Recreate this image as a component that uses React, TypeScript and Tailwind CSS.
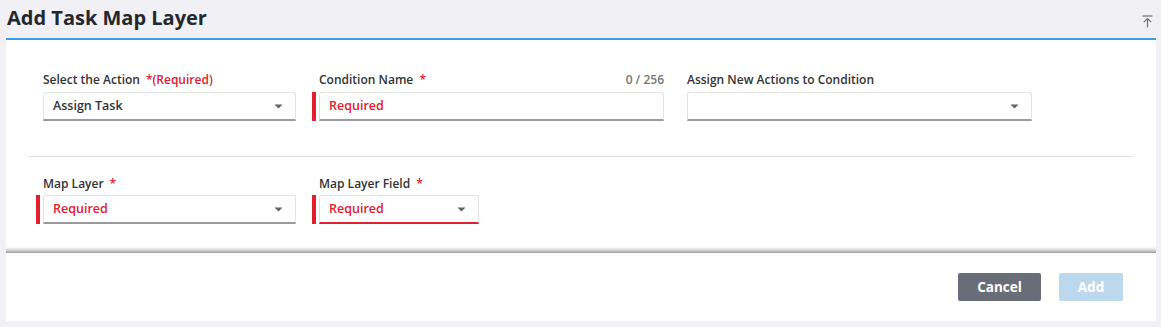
import React from "react";

const Caret = () => (
  <svg width="9" height="5" viewBox="0 0 9 5" className="shrink-0">
    <path d="M0.5 0.5 L8.5 0.5 L4.5 4.5 Z" fill="#616161" />
  </svg>
);

function Select({ value, required, widthClass, redBottom }: { value?: string; required?: boolean; widthClass: string; redBottom?: boolean }) {
  return (
    <div className={`relative ${widthClass}`}>
      {required && <div className="absolute left-[-7px] top-0 bottom-0 w-[4px] bg-[#e0202e]" />}
      <div
        className={`h-[29px] flex items-center justify-between pl-[9px] pr-[12px] bg-white border border-[#e2e2e2] rounded-t-[3px] ${
          redBottom ? "border-b-2 border-b-[#e0202e]" : "border-b-2 border-b-[#9a9a9a]"
        }`}
      >
        <span className={`text-[12.5px] font-semibold ${required ? "text-[#e0202e]" : "text-[#333]"}`}>{value}</span>
        <Caret />
      </div>
    </div>
  );
}

export default function App() {
  return (
    <div
      className="w-[1161px] h-[327px] bg-[#f1f0f5] pl-[6px] pr-[5px] overflow-hidden"
      style={{ fontFamily: '"Open Sans", "Noto Sans", sans-serif' }}
    >
      <div className="h-[38px] flex items-start justify-between">
        <h1 className="text-[20px] font-bold text-[#24282d] leading-none pl-[1px] pt-[8px]">Add Task Map Layer</h1>
        <svg width="11" height="13" viewBox="0 0 11 13" className="mt-[15px] mr-[3px]">
          <path d="M0.5 1 H10.5" stroke="#6f6f6f" strokeWidth="1.2" />
          <path d="M5.5 3.5 V12.5 M1.8 7.2 L5.5 3.5 L9.2 7.2" stroke="#6f6f6f" strokeWidth="1.2" fill="none" />
        </svg>
      </div>
      <div className="w-[1150px] border-t-2 border-t-[#3a9de8] bg-white">
        <div className="h-[207px] pt-[32px]">
          <div className="flex pl-[37px]">
            <div className="w-[253px]">
              <div className="h-[15px] flex items-center text-[12px] font-semibold text-[#333] mb-[5px]">
                Select the Action <span className="text-[#e0202e] ml-[6px]">*(Required)</span>
              </div>
              <Select value="Assign Task" widthClass="w-[253px]" />
            </div>
            <div className="w-[345px] ml-[23px]">
              <div className="h-[15px] flex items-center justify-between text-[12px] font-semibold text-[#333] mb-[5px]">
                <span>
                  Condition Name <span className="text-[#e0202e] ml-[3px]">*</span>
                </span>
                <span className="text-[#777]">0 / 256</span>
              </div>
              <div className="relative w-[345px]">
                <div className="absolute left-[-7px] top-0 bottom-0 w-[4px] bg-[#e0202e]" />
                <div className="h-[29px] flex items-center pl-[9px] bg-white border border-[#e2e2e2] border-b-2 border-b-[#9a9a9a] rounded-t-[3px]">
                  <span className="text-[12.5px] font-semibold text-[#e0202e]">Required</span>
                </div>
              </div>
            </div>
            <div className="w-[345px] ml-[23px]">
              <div className="h-[15px] flex items-center text-[12px] font-semibold text-[#333] mb-[5px]">
                Assign New Actions to Condition
              </div>
              <Select value="" widthClass="w-[345px]" />
            </div>
          </div>
          <div className="ml-[23px] w-[1104px] h-px bg-[#dcdcdc] mt-[35px]" />
          <div className="flex pl-[37px] mt-[19px]">
            <div className="w-[253px]">
              <div className="h-[15px] flex items-center text-[12px] font-semibold text-[#333] mb-[4px]">
                Map Layer <span className="text-[#e0202e] ml-[6px]">*</span>
              </div>
              <Select value="Required" required widthClass="w-[253px]" />
            </div>
            <div className="w-[160px] ml-[23px]">
              <div className="h-[15px] flex items-center text-[12px] font-semibold text-[#333] mb-[4px]">
                Map Layer Field <span className="text-[#e0202e] ml-[6px]">*</span>
              </div>
              <Select value="Required" required redBottom widthClass="w-[160px]" />
            </div>
          </div>
        </div>
        <div className="h-[6px] bg-gradient-to-b from-[#ffffff] via-[#d8d8d8] to-[#9c9c9c]" />
        <div className="h-[68px] flex items-start justify-end pt-[20px] pr-[33px] gap-[18px]">
          <button className="w-[83px] h-[28px] rounded-[2px] bg-[#686d78] text-white text-[13.5px] font-bold">Cancel</button>
          <button className="w-[64px] h-[28px] rounded-[2px] bg-[#bcd8ec] text-white text-[13.5px] font-bold">Add</button>
        </div>
      </div>
    </div>
  );
}
